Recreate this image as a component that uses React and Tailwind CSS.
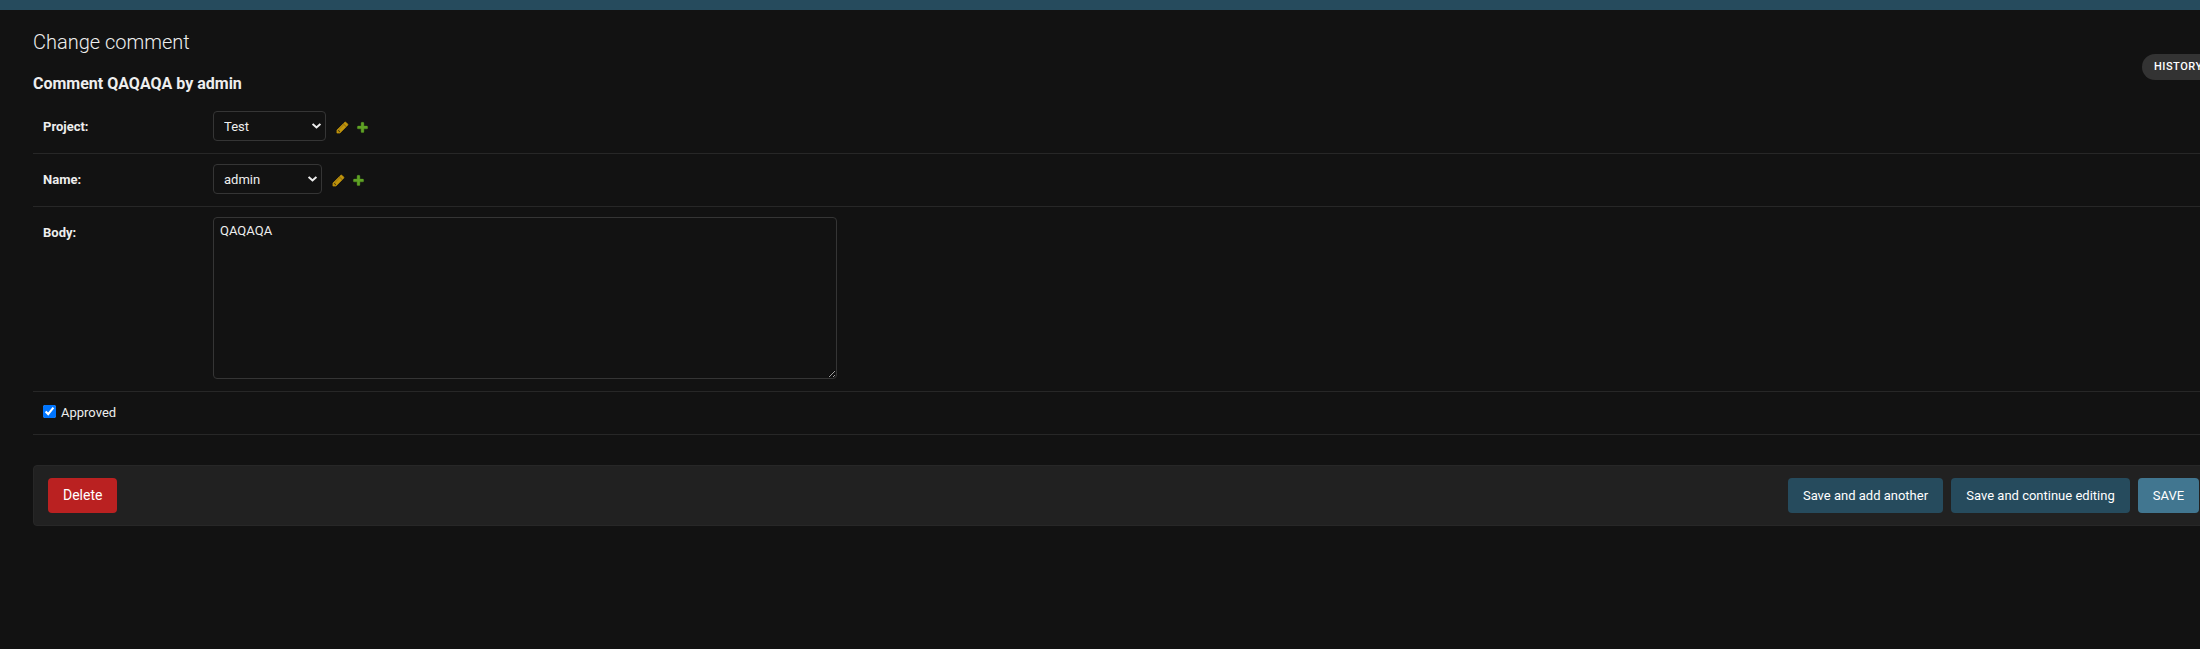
const font = "font-['Roboto',sans-serif]";

function Pencil() {
  return (
    <svg className="size-[13px]" viewBox="0 0 1792 1792" fill="#c0940c" stroke="#c0940c" strokeWidth="90">
      <path d="M491 1536l91-91-235-235-91 91v107h128v128h107zm523-928q0-22-22-22-10 0-17 7l-542 542q-7 7-7 17 0 22 22 22 10 0 17-7l542-542q7-7 7-17zm-54-192l416 416-832 832h-416v-416zm683 96q0 53-37 90l-166 166-416-416 166-165q36-38 90-38 53 0 91 38l235 234q37 39 37 91z" />
    </svg>
  );
}

function Plus() {
  return (
    <svg className="size-[13px]" viewBox="0 0 1792 1792" fill="#5fa225" stroke="#5fa225" strokeWidth="50">
      <path d="M1600 796v192q0 40-28 68t-68 28h-416v416q0 40-28 68t-68 28h-192q-40 0-68-28t-28-68v-416h-416q-40 0-68-28t-28-68v-192q0-40 28-68t68-28h416v-416q0-40 28-68t68-28h192q40 0 68 28t28 68v416h416q40 0 68 28t28 68z" />
    </svg>
  );
}

function SelectRow({ label, value, width }) {
  return (
    <div className="flex h-[53px] border-b border-[#272727] pt-[10px] pl-[10px]">
      <label className="w-[170px] pt-[6px] text-[13px] leading-[19px] font-bold text-[#eeeeee]">{label}</label>
      <div className={`${width} relative h-[30px]`}>
        <select className="h-[30px] w-full appearance-none rounded-[4px] border border-[#353535] bg-[#121212] px-[10px] pt-[2px] text-[13px] text-[#eeeeee]">
          <option>{value}</option>
        </select>
        <svg className="pointer-events-none absolute top-[12px] right-[5px] h-[6px] w-[9px]" viewBox="0 0 9 6" fill="none" stroke="#eeeeee" strokeWidth="2">
          <path d="M0.6 0.9L4.5 4.5L8.4 0.9" />
        </svg>
      </div>
      <div className="flex gap-[7px] pt-[10px] pl-[10px]">
        <Pencil />
        <Plus />
      </div>
    </div>
  );
}

export default function App() {
  return (
    <div className={`${font} h-[649px] w-[2200px] overflow-hidden bg-[#121212] text-[13px] text-[#eeeeee]`}>
      <header className="h-[10px] bg-[#264b5d]" />
      <main className="relative ml-[33px] w-[2181px] pt-[20px]">
        <h1 className="h-[24px] text-[20px] leading-[24px] font-light text-[#eeeeee]">Change comment</h1>
        <h2 className="mt-[20px] h-[20px] text-[16px] leading-[20px] font-bold text-[#eeeeee]">Comment QAQAQA by admin</h2>
        <a className="absolute top-[44px] left-[2109px] h-[26px] rounded-[15px] bg-[#333333] px-[12px] text-[11px] leading-[25px] font-medium tracking-[0.5px] text-white uppercase">History</a>
        <form className="pt-[7px]">
          <SelectRow label="Project:" value="Test" width="w-[113px]" />
          <SelectRow label="Name:" value="admin" width="w-[109px]" />
          <div className="flex h-[185px] border-b border-[#272727] pt-[10px] pl-[10px]">
            <label className="w-[170px] pt-[6px] leading-[19px] font-bold">Body:</label>
            <textarea className="h-[162px] w-[624px] resize rounded-[4px] border border-[#353535] bg-[#121212] px-[6px] py-[5px] text-[13px] leading-[15px] [color-scheme:dark]" defaultValue="QAQAQA" />
          </div>
          <div className="flex h-[43px] border-b border-[#272727] pt-[13px] pl-[10px]">
            <input type="checkbox" defaultChecked className="size-[13px]" />
            <label className="pl-[5px] leading-[16px]">Approved</label>
          </div>
          <div className="mt-[30px] flex h-[61px] items-center justify-between rounded-[4px] border border-[#272727] bg-[#212121] px-[14px]">
            <a className="h-[35px] rounded-[4px] bg-[#ba2121] px-[15px] text-[14px] leading-[35px] text-white">Delete</a>
            <div className="flex gap-[8px] text-white">
              <button className="h-[35px] w-[155px] rounded-[4px] bg-[#264b5d]">Save and add another</button>
              <button className="h-[35px] w-[179px] rounded-[4px] bg-[#264b5d]">Save and continue editing</button>
              <button className="h-[35px] w-[61px] rounded-[4px] bg-[#417690]">SAVE</button>
            </div>
          </div>
        </form>
      </main>
    </div>
  );
}
